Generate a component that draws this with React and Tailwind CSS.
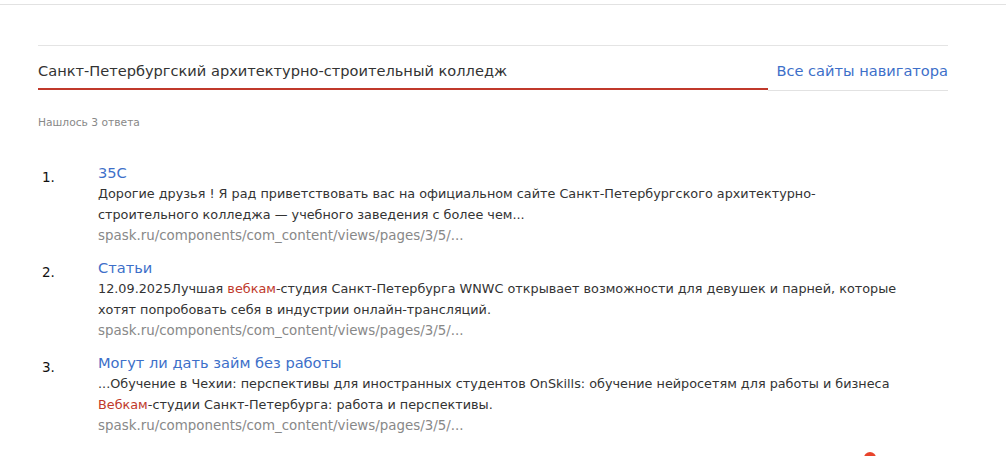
export default function App() {
  const font = { fontFamily: '"DejaVu Sans", Verdana, sans-serif' };
  const items = [
    {
      n: "1.",
      title: "35С",
      lines: [
        ["Дорогие друзья ! Я рад приветствовать вас на официальном сайте Санкт-Петербургского архитектурно-"],
        ["строительного колледжа — учебного заведения с более чем..."],
      ],
    },
    {
      n: "2.",
      title: "Статьи",
      lines: [
        ["12.09.2025Лучшая ", { r: "вебкам" }, "-студия Санкт-Петербурга WNWC открывает возможности для девушек и парней, которые"],
        ["хотят попробовать себя в индустрии онлайн-трансляций."],
      ],
    },
    {
      n: "3.",
      title: "Могут ли дать займ без работы",
      lines: [
        ["...Обучение в Чехии: перспективы для иностранных студентов OnSkills: обучение нейросетям для работы и бизнеса"],
        [{ r: "Вебкам" }, "-студии Санкт-Петербурга: работа и перспективы."],
      ],
    },
  ];
  return (
    <div className="w-[1006px] h-[456px] overflow-hidden bg-white" style={font}>
      <div className="pt-[4px]">
        <div className="border-t border-[#e2e2e2]" />
      </div>
      <div className="ml-[38px] w-[910px] mt-[40px]">
        <div className="border-t border-[#e4e4e4]" />
        <div className="flex items-start">
          <div className="w-[730px] pt-[16px] pb-[8px] border-b-[2px] border-[#c0392b] text-[14.6px] leading-[18px] text-[#333]">
            Санкт-Петербургский архитектурно-строительный колледж
          </div>
          <div className="flex-1 pt-[16px] pb-[10px] border-b border-[#e2e2e2] text-right text-[14.6px] leading-[18px] text-[#3d6fc9]">
            Все сайты навигатора
          </div>
        </div>
        <div className="mt-[25px] text-[10.7px] leading-[14px] text-[#888]">Нашлось 3 ответа</div>
        <div className="mt-[33px] flex flex-col gap-[12px]">
          {items.map((it) => (
            <div key={it.n} className="flex">
              <div className="w-[60px] pl-[4px] mt-[4px] text-[13.5px] leading-[20px] text-[#111]">{it.n}</div>
              <div className="flex-1">
                <div className="text-[14.6px] leading-[20px] text-[#3d6fc9]">{it.title}</div>
                {it.lines.map((ln, i) => (
                  <div key={i} className="text-[12.8px] leading-[21px] text-[#333] whitespace-nowrap">
                    {ln.map((p, j) =>
                      typeof p === "string" ? (
                        <span key={j}>{p}</span>
                      ) : (
                        <span key={j} className="text-[#c0392b]">{p.r}</span>
                      )
                    )}
                  </div>
                ))}
                <div className="text-[13.4px] leading-[21px] text-[#888]">spask.ru/components/com_content/views/pages/3/5/...</div>
              </div>
            </div>
          ))}
        </div>
        <div className="mt-[16px] ml-[826px] w-[12px] h-[10px] rounded-t-full bg-[#e8432b]" />
      </div>
    </div>
  );
}
